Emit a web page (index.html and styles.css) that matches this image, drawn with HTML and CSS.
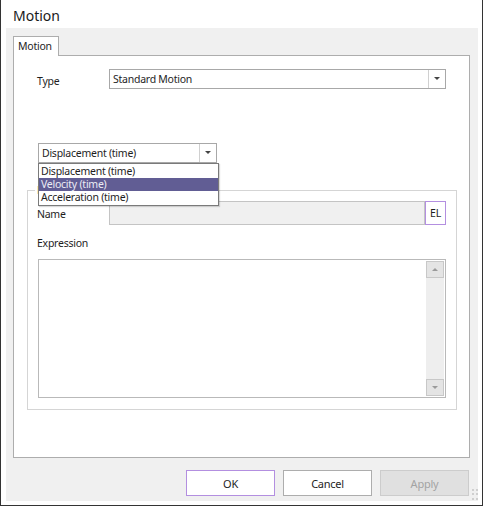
FILE: index.html
```html
<!DOCTYPE html>
<html>
<head>
<meta charset="utf-8">
<link rel="stylesheet" href="styles.css">
</head>
<body>
<div class="window">
  <div class="titlebar">Motion</div>
  <div class="client">
    <div class="tabs">
      <div class="tab">Motion</div>
    </div>
    <div class="panel">
      <div class="row type-row">
        <span class="label">Type</span>
        <div class="combo wide"><span class="combo-text">Standard Motion</span><span class="arrow"></span></div>
      </div>
      <div class="combo small"><span class="combo-text">Displacement (time)</span><span class="arrow"></span></div>
      <div class="group">
        <div class="legend">B</div>
        <div class="row name-row">
          <span class="label">Name</span>
          <div class="namefield"></div>
          <div class="elbtn">EL</div>
        </div>
        <div class="expr-label">Expression</div>
        <div class="textarea">
          <div class="scroll">
            <div class="sbtn"><span class="up"></span></div>
            <div class="track"></div>
            <div class="sbtn"><span class="down"></span></div>
          </div>
        </div>
      </div>
      <div class="dropdown">
        <div class="item">Displacement (time)</div>
        <div class="item selected">Velocity (time)</div>
        <div class="item">Acceleration (time)</div>
      </div>
    </div>
    <div class="buttons">
      <div class="btn ok">OK</div>
      <div class="btn">Cancel</div>
      <div class="btn disabled">Apply</div>
    </div>
    <div class="grip">
      <span></span><span></span><span></span><span></span><span></span><span></span>
    </div>
  </div>
</div>
</body>
</html>
```
FILE: styles.css
```css
* { box-sizing: border-box; }
html, body { margin: 0; padding: 0; background: #ffffff; }
body {
  font-family: "Segoe UI", "Noto Sans", "Liberation Sans", sans-serif;
  font-size: 10.5px;
  letter-spacing: -0.25px;
  color: #1e1e1e;
}
.window {
  width: 483px;
  height: 506px;
  background: #ffffff;
  border: 1px solid #333333;
  border-top: none;
  display: flex;
  flex-direction: column;
}
.titlebar {
  height: 28px;
  padding: 6px 0 0 12px;
  font-size: 14px;
  letter-spacing: 0;
  color: #1a1a1a;
  line-height: 20px;
}
.client {
  position: relative;
  flex: 1;
  margin: 0 4px 4px 5px;
  background: #f0f0f0;
  padding: 8px 8px 0 7px;
  display: flex;
  flex-direction: column;
}
.tabs { display: flex; height: 19px; }
.tab {
  width: 46px;
  height: 20px;
  background: #ffffff;
  border: 1px solid #adadad;
  border-bottom: none;
  padding: 1px 0 0 4px;
  line-height: 16px;
  position: relative;
  z-index: 1;
}
.panel {
  position: relative;
  height: 403px;
  background: #ffffff;
  border: 1px solid #adadad;
  padding: 13px 0 0 13px;
}
.row { display: flex; align-items: center; }
.label { width: 82px; padding-left: 10px; }
.type-row .label { padding-top: 3px; }
.combo {
  height: 20px;
  border: 1px solid #a8a8a8;
  background: #ffffff;
  display: flex;
  align-items: center;
  position: relative;
}
.combo-text { flex: 1; padding-left: 3px; line-height: 16px; }
.combo .arrow {
  width: 17px;
  height: 18px;
  border-left: 1px solid #d0d0d0;
  position: relative;
}
.combo .arrow::after {
  content: "";
  position: absolute;
  left: 5px;
  top: 7px;
  border-left: 3px solid transparent;
  border-right: 3px solid transparent;
  border-top: 3px solid #444444;
}
.combo.wide { width: 337px; }
.combo.small { width: 179px; margin: 54px 0 0 11px; }
.group {
  position: relative;
  width: 430px;
  height: 220px;
  margin-top: 27px;
  border: 1px solid #d5d5d5;
  padding: 10px 0 0 0;
}
.legend {
  position: absolute;
  left: 7px;
  top: -8px;
  background: #ffffff;
  padding: 0 2px;
  line-height: 14px;
}
.name-row .label { width: 81px; padding-left: 9px; padding-top: 2px; }
.namefield {
  width: 316px;
  height: 24px;
  background: #f0f0f0;
  border: 1px solid #c4c4c4;
}
.elbtn {
  width: 21px;
  height: 24px;
  border: 1px solid #b38fe0;
  background: #ffffff;
  display: flex;
  align-items: center;
  justify-content: center;
}
.expr-label { padding: 10px 0 0 9px; height: 34px; line-height: 16px; }
.textarea {
  margin-left: 10px;
  width: 408px;
  height: 139px;
  border: 1px solid #b9b9b9;
  background: #ffffff;
  display: flex;
  justify-content: flex-end;
  padding: 1px;
}
.scroll {
  width: 18px;
  display: flex;
  flex-direction: column;
  background: #eeeeee;
}
.sbtn {
  height: 17px;
  border: 1px solid #c8c8c8;
  background: #e4e4e4;
  display: flex;
  align-items: center;
  justify-content: center;
}
.track { flex: 1; }
.up {
  border-left: 3px solid transparent;
  border-right: 3px solid transparent;
  border-bottom: 3px solid #9a9a9a;
}
.down {
  border-left: 3px solid transparent;
  border-right: 3px solid transparent;
  border-top: 3px solid #9a9a9a;
}
.dropdown {
  position: absolute;
  left: 24px;
  top: 107px;
  width: 181px;
  background: #ffffff;
  border: 1px solid #7a7a7a;
  box-shadow: 1px 1px 1px rgba(0,0,0,0.15);
  padding: 1px 0;
  z-index: 2;
}
.item { height: 13px; line-height: 13px; padding-left: 2px; }
.item.selected { background: #615d94; color: #ececf4; }
.buttons {
  display: flex;
  justify-content: flex-end;
  gap: 8px;
  margin-top: 12px;
  padding-right: 1px;
}
.btn {
  width: 89px;
  height: 26px;
  border: 1px solid #adadad;
  background: #ffffff;
  display: flex;
  align-items: center;
  justify-content: center;
  font-size: 11px;
}
.btn.ok { border-color: #b38fe0; }
.btn.disabled { background: #e0e0e0; border-color: #cccccc; color: #a3a3a3; }
.grip {
  position: absolute;
  right: 0;
  bottom: 0;
  width: 8px;
  height: 12px;
  display: grid;
  grid-template-columns: 2px 2px;
  gap: 2px;
  justify-content: end;
  padding: 0 0 1px 0;
}
.grip span { width: 2px; height: 2px; background: #cfcfcf; }
```
